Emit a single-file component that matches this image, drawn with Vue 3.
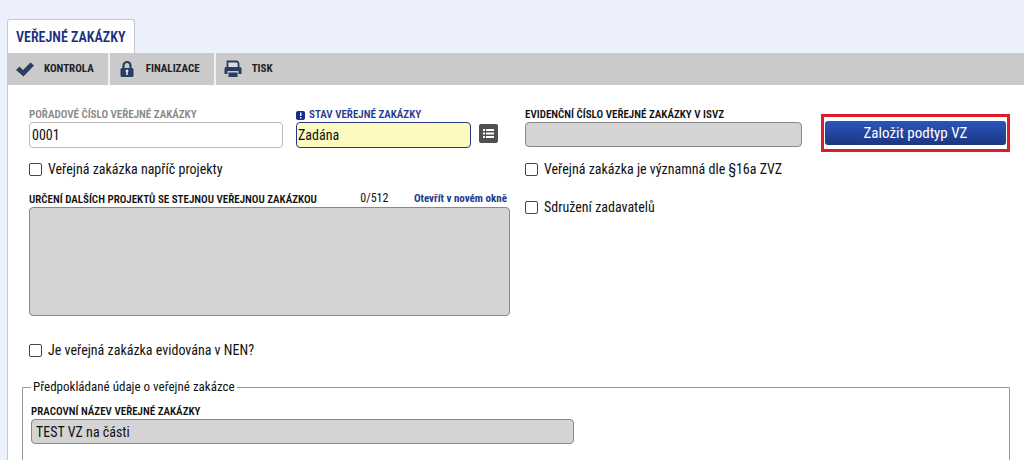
<script setup>
import { ref } from 'vue'

const number = ref('0001')
const state = ref('Zadána')
const registry = ref('')
const projects = ref('')
const title = ref('TEST VZ na části')
</script>

<template>
  <div class="page">
    <nav class="tabs">
      <a class="tab" href="#zakazky">VEŘEJNÉ ZAKÁZKY</a>
    </nav>
    <main id="zakazky" class="panel">
      <div class="toolbar">
        <button type="button" class="tool">
          <svg class="tool-icon" viewBox="0 0 18 18" aria-hidden="true">
            <path d="M0 10 3.500 6.500 7 10 14.500 2.500 18 5.500 7.500 16.500Z" fill="#293d61" />
          </svg>
          <span>KONTROLA</span>
        </button>
        <button type="button" class="tool">
          <svg class="tool-icon" viewBox="0 0 18 18" aria-hidden="true">
            <path d="M5.500 9V5.500a3.500 3.500 0 0 1 7 0V9" fill="none" stroke="#293d61" stroke-width="2.200" />
            <rect x="2.500" y="8" width="13" height="9" rx="1.500" fill="#293d61" />
            <path d="M9 9.500a1.500 1.500 0 0 1 .8 2.700V15H8.200v-2.800A1.500 1.500 0 0 1 9 9.500Z" fill="#e4e7ec" />
          </svg>
          <span>FINALIZACE</span>
        </button>
        <button type="button" class="tool print">
          <svg class="tool-icon" viewBox="0 0 18 18" aria-hidden="true">
            <path d="M3.500 8V1.500H13L14.500 3v5" fill="#d9dde4" stroke="#293d61" stroke-width="1.800" />
            <path d="M2 7h14a1.500 1.500 0 0 1 1.500 1.500V14H14.500v-3h-11v3H.5V8.500A1.500 1.500 0 0 1 2 7Z" fill="#293d61" />
            <rect x="4.500" y="12.500" width="9" height="4.500" fill="#293d61" />
          </svg>
          <span>TISK</span>
        </button>
      </div>

      <form class="form" @submit.prevent>
        <div class="columns">
          <section class="left">
            <div class="pair">
              <div class="field">
                <label class="caption muted" for="number">POŘADOVÉ ČÍSLO VEŘEJNÉ ZAKÁZKY</label>
                <input id="number" v-model="number" class="box" type="text" />
              </div>
              <div class="state">
                <div class="field">
                  <label class="caption required" for="state">
                    <svg class="mark" viewBox="0 0 9 9" aria-hidden="true">
                      <rect width="9" height="9" rx="2" fill="#152d85" />
                      <path d="M4 1.500h1.500v3.500H4zM4 6h1.500v1.500H4z" fill="#fff" />
                    </svg>
                    STAV VEŘEJNÉ ZAKÁZKY
                  </label>
                  <input id="state" v-model="state" class="box chosen" type="text" />
                </div>
                <button type="button" class="list" aria-label="Seznam">
                  <svg viewBox="0 0 19 19" aria-hidden="true">
                    <path d="M4 5h2v2H4zM7 5h8v2H7zM4 8.500h2v2H4zM7 8.500h8v2H7zM4 12h2v2H4zM7 12h8v2H7z" fill="#fff" />
                  </svg>
                </button>
              </div>
            </div>
            <label class="check"><input type="checkbox" />Veřejná zakázka napříč projekty</label>
            <div class="area-head">
              <label class="caption" for="projects">URČENÍ DALŠÍCH PROJEKTŮ SE STEJNOU VEŘEJNOU ZAKÁZKOU</label>
              <span class="count">{{ projects.length }}/512</span>
              <a class="open" href="#projects">Otevřít v novém okně</a>
            </div>
            <textarea id="projects" v-model="projects" class="area" readonly></textarea>
          </section>

          <section class="middle">
            <div class="field">
              <label class="caption" for="registry">EVIDENČNÍ ČÍSLO VEŘEJNÉ ZAKÁZKY V ISVZ</label>
              <input id="registry" v-model="registry" class="box locked" type="text" readonly />
            </div>
            <label class="check"><input type="checkbox" />Veřejná zakázka je významná dle §16a ZVZ</label>
            <label class="check second"><input type="checkbox" />Sdružení zadavatelů</label>
          </section>

          <div class="highlight">
            <button type="button" class="create">Založit podtyp VZ</button>
          </div>
        </div>

        <label class="check nen"><input type="checkbox" />Je veřejná zakázka evidována v NEN?</label>

        <fieldset class="group">
          <legend>Předpokládané údaje o veřejné zakázce</legend>
          <div class="field title">
            <label class="caption" for="title">PRACOVNÍ NÁZEV VEŘEJNÉ ZAKÁZKY</label>
            <input id="title" v-model="title" class="box locked" type="text" readonly />
          </div>
        </fieldset>
      </form>
    </main>
  </div>
</template>

<style>
html,
body {
  background: #ebf0fc;
}
body {
  overflow: hidden;
}
</style>

<style scoped>
.page,
.page * {
  box-sizing: border-box;
}
.page {
  display: flex;
  flex-direction: column;
  min-height: 100vh;
  padding: 19px 0 0 7px;
  font-family: "Roboto Condensed", "Liberation Sans Narrow", Roboto, sans-serif;
  font-size: 14px;
  color: #111;
}
button,
input,
textarea {
  font: inherit;
  color: inherit;
}
.tabs {
  display: flex;
}
.tab {
  height: 34px;
  padding: 0 8px;
  border: 1px solid #c5c8d0;
  border-bottom: 0;
  border-radius: 3px 3px 0 0;
  background: #fff;
  color: #1b2f7c;
  font-size: 14px;
  font-weight: 600;
  line-height: 35px;
  text-decoration: none;
  white-space: nowrap;
}
.panel {
  flex: 1;
  border-left: 1px solid #c5c8d0;
  background: #fff;
}
.toolbar {
  display: flex;
  height: 32px;
  background: #cacaca;
}
.tool {
  display: flex;
  align-items: center;
  gap: 10px;
  padding: 0 14px 0 8px;
  border: 0;
  border-right: 2px solid #f2f2f2;
  background: none;
  color: #222;
  font-size: 11px;
  font-weight: 700;
  line-height: 16px;
  white-space: nowrap;
}
.tool.print {
  border-right: 0;
}
.tool-icon {
  width: 18px;
  height: 18px;
}
.form {
  padding: 23px 14px 0;
}
.columns {
  display: grid;
  grid-template-columns: 481fr 281fr 189fr;
  column-gap: 15px;
  padding-left: 7px;
}
.columns > * {
  min-width: 0;
}
.middle {
  padding-right: 4px;
}
.pair {
  display: grid;
  grid-template-columns: 254fr 214fr;
  column-gap: 13px;
}
.state {
  display: flex;
  gap: 8px;
  padding-right: 12px;
}
.field {
  display: flex;
  flex: 1;
  flex-direction: column;
  min-width: 0;
  min-height: 40px;
}
.caption {
  height: 14px;
  font-size: 11px;
  font-weight: 600;
  line-height: 14px;
  white-space: nowrap;
}
.muted {
  color: #888;
}
.required {
  display: flex;
  align-items: center;
  gap: 4px;
  color: #1f3b8e;
}
.mark {
  width: 9px;
  height: 9px;
}
.box {
  width: 100%;
  height: 26px;
  padding: 0 2px;
  border: 1px solid #bbb;
  border-radius: 4px;
  background: #fff;
  outline: 0;
}
.chosen {
  border-color: #26377d;
  background: #fdfac0;
  padding: 0 1px;
}
.locked {
  height: 25px;
  padding: 0 4px;
  border-color: #888;
  background: #d4d4d4;
}
.list {
  flex: none;
  width: 19px;
  height: 19px;
  margin-top: 16px;
  padding: 0;
  border: 0;
  border-radius: 2px;
  background: #505050;
}
.list svg {
  display: block;
}
.check {
  display: flex;
  align-items: center;
  gap: 6px;
  height: 18px;
  margin-top: 12px;
  line-height: 18px;
  white-space: nowrap;
}
.check input {
  appearance: none;
  flex: none;
  width: 13px;
  height: 13px;
  margin: 0;
  border: 1px solid #344f4b;
  border-radius: 2px;
  background: #fff;
}
.check input:checked {
  background: #26377d;
}
.check.second {
  margin-top: 20px;
}
.area-head {
  display: flex;
  justify-content: space-between;
  height: 17px;
  margin-top: 12px;
  padding-right: 3px;
  line-height: 17px;
  font-size: 12px;
  white-space: nowrap;
}
.area-head .caption {
  align-self: flex-end;
}
.count {
  margin-left: 18px;
}
.open {
  color: #1f3b8e;
  font-size: 11px;
  font-weight: 700;
  text-decoration: none;
}
.area {
  display: block;
  width: 100%;
  height: 109px;
  padding: 4px;
  border: 1px solid #888;
  border-radius: 4px;
  background: #d4d4d4;
  outline: 0;
  resize: none;
}
.highlight {
  align-self: start;
  margin-top: 6px;
  padding: 4px 1px;
  border: 3px solid #dc1c28;
}
.create {
  display: block;
  width: 100%;
  height: 24px;
  padding: 0;
  border: 0;
  border-radius: 3px;
  background: linear-gradient(#2b55bd, #1c3680);
  color: #fff;
  font-size: 15px;
  line-height: 24px;
}
.check.nen {
  margin-top: 25px;
  padding-left: 7px;
}
.group {
  min-width: 0;
  margin: 20px 0 0;
  padding: 0 8px 24px;
  border: 1px solid #999;
  border-bottom: 0;
}
.group legend {
  padding: 0 2px;
  font-size: 13px;
  line-height: 16px;
}
.title {
  width: 56%;
  margin-top: 10px;
}
</style>
